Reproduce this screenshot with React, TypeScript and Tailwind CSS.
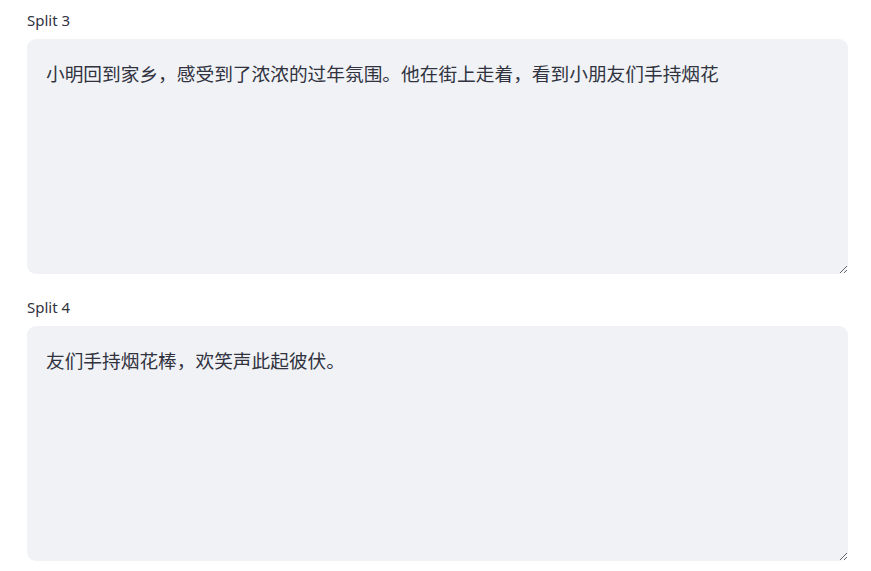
import React, { useState } from 'react';

const splits = [
  { label: 'Split 3', text: '小明回到家乡，感受到了浓浓的过年氛围。他在街上走着，看到小朋友们手持烟花' },
  { label: 'Split 4', text: '友们手持烟花棒，欢笑声此起彼伏。' },
];

const SplitBox: React.FC<{ label: string; initial: string }> = ({ label, initial }) => {
  const [value, setValue] = useState(initial);

  return (
    <div className="flex flex-col">
      <label className="text-[15px] leading-[20px] text-[#31333f] font-['Noto_Sans','Noto_Sans_CJK_SC',sans-serif] mb-[9px]">
        {label}
      </label>
      <textarea
        value={value}
        onChange={(e) => setValue(e.target.value)}
        className="w-full h-[235px] resize-y rounded-[9px] bg-[#f0f2f6] px-[19px] py-[19px] text-[18.7px] leading-[30px] text-[#31333f] outline-none font-['Noto_Sans_CJK_SC','Noto_Sans',sans-serif]"
      />
    </div>
  );
};

export default function App() {
  return (
    <div className="min-h-screen bg-white pl-[27px] pr-[23px] pt-[10px] flex flex-col gap-[23px]">
      {splits.map((s) => (
        <SplitBox key={s.label} label={s.label} initial={s.text} />
      ))}
    </div>
  );
}
